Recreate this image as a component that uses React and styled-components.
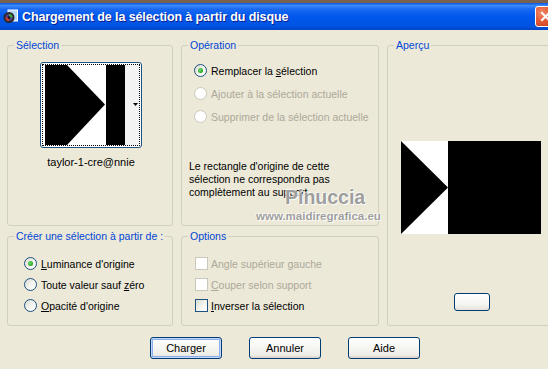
import React from 'react';
import styled, { createGlobalStyle } from 'styled-components';

const Global = createGlobalStyle`
  html, body { margin: 0; padding: 0; background: #ECE9D8; }
  body { font-family: "Liberation Sans", Arial, sans-serif; font-size: 10.5px; color: #000; }
`;

const Win = styled.div`
  position: relative;
  width: 548px;
  height: 369px;
  overflow: hidden;
  background: #ECE9D8;
  display: flex;
  flex-direction: column;
`;

const TitleBar = styled.div`
  height: 27px;
  border-top: 3px solid #7a6250;
  background: linear-gradient(to bottom, #0758E3 0%, #3B8BF8 10%, #1A69F2 22%, #0057EC 50%, #0054E3 85%, #0044C4 100%);
  display: flex;
  align-items: center;
  padding-left: 3px;
  flex: none;
`;

const TitleText = styled.div`
  margin-left: 4px;
  color: #fff;
  font-weight: bold;
  font-size: 12.5px;
  letter-spacing: -0.1px;
  text-shadow: 1px 1px 0 #0A1E8C;
`;

const CloseBtn = styled.div`
  margin-left: auto;
  margin-right: -8px;
  width: 21px;
  height: 21px;
  box-sizing: border-box;
  border: 1px solid #fff;
  border-radius: 3px;
  background: radial-gradient(circle at 30% 30%, #F08A6A 0%, #E35A36 45%, #C8381A 100%);
  display: flex;
  align-items: center;
  justify-content: center;
`;

const Body = styled.div`
  display: grid;
  grid-template-columns: 166px 198px 170px;
  grid-template-rows: 187px 96px;
  column-gap: 8px;
  row-gap: 4px;
  padding: 9px 0 0 7px;
`;

const Group = styled.fieldset`
  margin: 0;
  padding: 0;
  min-width: 0;
  border: 1px solid #D0D0BF;
  border-radius: 3px;
  grid-column: ${p => p.$col || 'auto'};
  grid-row: ${p => p.$row || 'auto'};
`;

const Legend = styled.legend`
  margin-left: 6px;
  padding: 0 2px;
  color: #0046D5;
  line-height: 13px;
  white-space: nowrap;
`;

const SelBody = styled.div`
  display: flex;
  flex-direction: column;
  align-items: center;
  padding: 10px 0 0 2px;
`;

const Thumb = styled.div`
  width: 102px;
  height: 86px;
  box-sizing: border-box;
  border: 1px solid #1C5180;
  border-radius: 3px;
  padding: 1px;
  background: #fff;
`;

const Focus = styled.div`
  border: 1px dotted #000;
  height: 100%;
  box-sizing: border-box;
  display: flex;
`;

const Caption = styled.div`
  margin-top: 8px;
  line-height: 13px;
  font-size: 11px;
`;

const OpBody = styled.div`
  padding: 12px 0 0 12px;
  display: flex;
  flex-direction: column;
  gap: 10px;
`;

const Row = styled.div`
  display: flex;
  align-items: center;
  height: 13px;
  gap: ${p => p.$gap || 4}px;
  color: ${p => p.$disabled ? '#ACA899' : '#000'};
  white-space: nowrap;
`;

const Note = styled.p`
  margin: 27px 0 0 -5px;
  line-height: 13px;
`;

const Radio = styled.span`
  flex: none;
  width: 13px;
  height: 13px;
  box-sizing: border-box;
  border-radius: 50%;
  border: 1px solid ${p => p.$disabled ? '#CAC8BB' : '#1C5180'};
  background: ${p => p.$disabled ? '#fff' : 'linear-gradient(135deg, #DCDCD4 0%, #F4F4F0 55%, #fff 100%)'};
  display: flex;
  align-items: center;
  justify-content: center;
  &::after {
    content: '';
    display: ${p => p.$checked ? 'block' : 'none'};
    width: 5px;
    height: 5px;
    border-radius: 50%;
    background: radial-gradient(circle at 40% 40%, #6EE06E 0%, #21A121 70%);
  }
`;

const Check = styled.span`
  flex: none;
  width: 13px;
  height: 13px;
  box-sizing: border-box;
  border: 1px solid ${p => p.$disabled ? '#CAC8BB' : '#1C5180'};
  background: ${p => p.$disabled ? '#fff' : 'linear-gradient(135deg, #DCDCD4 0%, #F4F4F0 55%, #fff 100%)'};
`;

const CreBody = styled.div`
  padding: 14px 0 0 16px;
  display: flex;
  flex-direction: column;
  gap: 8px;
`;

const OptBody = styled.div`
  padding: 14px 0 0 13px;
  display: flex;
  flex-direction: column;
  gap: 8px;
`;

const PrevBody = styled.div`
  display: flex;
  flex-direction: column;
  align-items: flex-start;
  padding-left: 13px;
`;

const PreviewImg = styled.svg`
  margin-top: 89px;
  display: block;
`;

const SmallBtn = styled.div`
  margin: 59px 0 0 53px;
  width: 36px;
  height: 18px;
  box-sizing: border-box;
  border: 1px solid #003C74;
  border-radius: 3px;
  background: linear-gradient(to bottom, #fff 0%, #F6F6F3 60%, #E4E2DA 100%);
`;

const Buttons = styled.div`
  display: flex;
  gap: 27px;
  padding: 11px 0 0 150px;
`;

const Button = styled.div`
  width: 72px;
  height: 22px;
  box-sizing: border-box;
  border: 1px solid #003C74;
  border-radius: 3px;
  font-size: 11px;
  background: linear-gradient(to bottom, #fff 0%, #F5F5F1 50%, #EEEDE7 85%, #D8D2C6 100%);
  box-shadow: ${p => p.$default ? 'inset 0 0 0 1px #C4D6F7, inset 0 0 0 2px #8CAEEE' : 'none'};
  display: flex;
  align-items: center;
  justify-content: center;
`;

const Watermark = styled.div`
  position: absolute;
  left: ${p => p.$x}px;
  top: ${p => p.$y}px;
  font-size: ${p => p.$size}px;
  line-height: ${p => p.$size}px;
  font-weight: bold;
  color: rgba(140, 140, 140, 0.85);
  text-shadow: 0 0 1px #fff, 1px 1px 0 rgba(255,255,255,0.8), -1px -1px 0 rgba(255,255,255,0.6);
  pointer-events: none;
`;

const U = styled.span`
  text-decoration: underline;
`;

function AppIcon() {
  return (
    <svg width="15" height="15" viewBox="0 0 15 15">
      <rect x="5" y="1" width="9.5" height="11" fill="#B9D7F7" stroke="#fff" strokeWidth="1" />
      <circle cx="6" cy="8.5" r="5.5" fill="#2a2a2a" />
      <circle cx="6" cy="8.5" r="3.5" fill="#5a3a8a" />
      <path d="M6 5 A3.5 3.5 0 0 1 9.5 8.5 L6 8.5Z" fill="#3cb043" />
      <path d="M6 12 A3.5 3.5 0 0 1 2.5 8.5 L6 8.5Z" fill="#d23a2a" />
      <circle cx="6" cy="8.5" r="1.3" fill="#111" />
    </svg>
  );
}

export default function App() {
  return (
    <>
      <Global />
      <Win>
        <TitleBar>
          <AppIcon />
          <TitleText>Chargement de la sélection à partir du disque</TitleText>
          <CloseBtn>
            <svg width="11" height="11" viewBox="0 0 11 11">
              <path d="M2 2 L9 9 M9 2 L2 9" stroke="#fff" strokeWidth="2" strokeLinecap="square" />
            </svg>
          </CloseBtn>
        </TitleBar>

        <Body>
          <Group $col="1" $row="1">
            <Legend>Sélection</Legend>
            <SelBody>
              <Thumb>
                <Focus>
                  <svg width="96" height="80" viewBox="0 0 96 80">
                    <rect width="96" height="80" fill="#fff" />
                    <polygon points="2,0 24,0 62,39.5 24,80 2,80" fill="#000" />
                    <rect x="63" y="0" width="19" height="80" fill="#000" />
                    <rect x="82" y="0" width="14" height="80" fill="#F3F3F3" />
                    <polygon points="90,38 95,38 92.5,41" fill="#000" />
                  </svg>
                </Focus>
              </Thumb>
              <Caption>taylor-1-cre@nnie</Caption>
            </SelBody>
          </Group>

          <Group $col="2" $row="1">
            <Legend>Opération</Legend>
            <OpBody>
              <Row><Radio $checked /><span>Remplacer la <U>s</U>élection</span></Row>
              <Row $disabled><Radio $disabled /><span>Ajouter à la sélection actuelle</span></Row>
              <Row $disabled><Radio $disabled /><span>Supprimer de la sélection actuelle</span></Row>
              <Note>
                Le rectangle d'origine de cette<br />
                sélection ne correspondra pas<br />
                complètement au support
              </Note>
            </OpBody>
          </Group>

          <Group $col="3" $row="1 / span 2">
            <Legend>Aperçu</Legend>
            <PrevBody>
              <PreviewImg width="140" height="93" viewBox="0 0 140 93">
                <rect width="47" height="93" fill="#fff" />
                <polygon points="0,0 47,46.5 0,93" fill="#000" />
                <rect x="47" width="93" height="93" fill="#000" />
              </PreviewImg>
              <SmallBtn />
            </PrevBody>
          </Group>

          <Group $col="1" $row="2">
            <Legend>Créer une sélection à partir de :</Legend>
            <CreBody>
              <Row><Radio $checked /><span><U>L</U>uminance d'origine</span></Row>
              <Row><Radio /><span>Toute valeur sauf <U>z</U>éro</span></Row>
              <Row><Radio /><span><U>O</U>pacité d'origine</span></Row>
            </CreBody>
          </Group>

          <Group $col="2" $row="2">
            <Legend>Options</Legend>
            <OptBody>
              <Row $gap={3} $disabled><Check $disabled /><span>Angle supérieur gauche</span></Row>
              <Row $gap={3} $disabled><Check $disabled /><span><U>C</U>ouper selon support</span></Row>
              <Row $gap={3}><Check /><span><U>I</U>nverser la sélection</span></Row>
            </OptBody>
          </Group>
        </Body>

        <Buttons>
          <Button $default>Charger</Button>
          <Button>Annuler</Button>
          <Button>Aide</Button>
        </Buttons>

        <Watermark $x={285} $y={188} $size={19.5}>Pinuccia</Watermark>
        <Watermark $x={256} $y={211} $size={11.5}>www.maidiregrafica.eu</Watermark>
      </Win>
    </>
  );
}
